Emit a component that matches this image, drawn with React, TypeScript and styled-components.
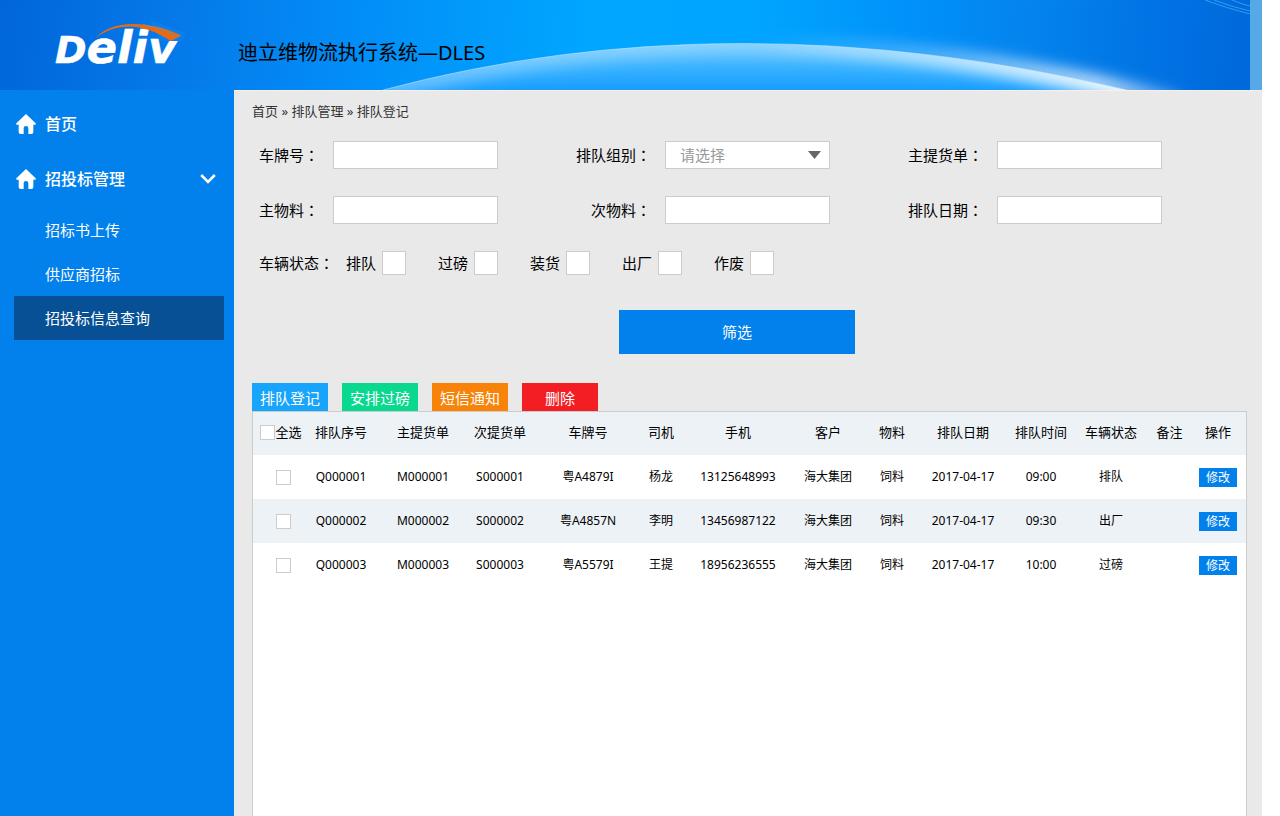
import React from "react";
import styled, { createGlobalStyle } from "styled-components";

const GlobalStyle = createGlobalStyle`
  *, *::before, *::after { box-sizing: border-box; }
  body {
    margin: 0;
    background: #fff;
    color: #000;
    font-family: "Noto Sans", "Noto Sans CJK SC", sans-serif;
    font-size: 15px;
    line-height: 20px;
  }
  button, input, select { font: inherit; margin: 0; }
`;

const Page = styled.div`
  min-height: 100vh;
  display: flex;
  flex-direction: column;
  margin-right: 18px;
`;

/* ---------- header ---------- */

const Header = styled.header`
  position: relative;
  display: flex;
  align-items: center;
  height: 90px;
  padding-left: 52px;
  border-right: 12px solid #55a9e6;
  background: linear-gradient(
    96deg,
    #0166da 0%,
    #0579e9 14%,
    #0290f8 30%,
    #00a6ff 47%,
    #00a5ff 60%,
    #0092fa 72%,
    #0483ee 82%,
    #0070e2 94%,
    #0068da 100%
  );
`;

const Backdrop = styled.svg`
  position: absolute;
  inset: 0;
  width: 100%;
  height: 100%;
`;

const Logo = styled.svg`
  position: relative;
  flex: none;
  width: 140px;
  height: 90px;
  margin-right: 46px;
`;

const SystemName = styled.h1`
  position: relative;
  margin: 16px 0 0;
  font-size: 20px;
  font-weight: 400;
  line-height: 28px;
  white-space: nowrap;
`;

/* ---------- sidebar ---------- */

const Body = styled.div`
  flex: 1;
  display: flex;
`;

const Sidebar = styled.nav`
  flex: none;
  width: 234px;
  padding: 6px 10px 0 14px;
  background: #0280eb;
`;

const NavItem = styled.a`
  display: flex;
  align-items: center;
  height: 55px;
  padding: 0 8px 0 2px;
  gap: 9px;
  color: #fff;
  font-size: 16px;
  font-weight: 500;
  text-decoration: none;
`;

const NavText = styled.span`
  flex: 1;
`;

const SubList = styled.div`
  margin-top: 2px;
`;

const SubItem = styled.a<{ $active?: boolean }>`
  display: flex;
  align-items: center;
  height: 44px;
  padding-left: 31px;
  color: #fff;
  text-decoration: none;
  background: ${(p) => (p.$active ? "#075096" : "transparent")};
`;

/* ---------- main ---------- */

const Main = styled.main`
  flex: 1;
  min-width: 0;
  display: flex;
  flex-direction: column;
  border-top: 1px solid #fbefe8;
  background: #e9e9e9;
`;

const Breadcrumb = styled.div`
  height: 40px;
  padding-left: 18px;
  color: #333;
  font-size: 13px;
  line-height: 40px;
`;

const Crumb = styled.a`
  color: inherit;
  text-decoration: none;
`;

const FilterForm = styled.form`
  display: grid;
  grid-template-columns: repeat(3, 1fr);
  row-gap: 27px;
  margin: 10px 25px 0 7px;
`;

const Field = styled.div`
  position: relative;
  display: flex;
  align-items: center;
  gap: 14px;
`;

const FieldLabel = styled.label`
  width: 78px;
  text-align: right;
  white-space: nowrap;
`;

/* Centred full-width colon */
const Colon = styled.span`
  font-family: "Noto Sans CJK TC", sans-serif;
`;

const TextBox = styled.input`
  width: 165px;
  height: 28px;
  padding: 0 8px;
  border: 1px solid #ccc;
  background: #fff;
`;

const SelectWrap = styled.div`
  position: relative;
  width: 165px;
`;

const SelectBox = styled.select`
  display: block;
  width: 100%;
  height: 28px;
  padding: 0 24px 0 14px;
  border: 1px solid #ccc;
  border-radius: 0;
  appearance: none;
  background: #fff;
  color: #999;
`;

const Arrow = styled.svg`
  position: absolute;
  right: 9px;
  top: 10px;
  width: 13px;
  height: 8px;
  pointer-events: none;
`;

const StatusRow = styled.div`
  grid-column: 1 / -1;
  display: flex;
  align-items: center;
  padding-left: 18px;
`;

const StatusTitle = styled.span`
  width: 87px;
`;

const StatusOption = styled.label`
  display: flex;
  align-items: center;
  gap: 6px;
  margin-right: 32px;
  white-space: nowrap;
`;

const Check = styled.input<{ $size: number }>`
  appearance: none;
  flex: none;
  width: ${(p) => p.$size}px;
  height: ${(p) => p.$size}px;
  border: 1px solid #ccc;
  background: #fff;
  vertical-align: middle;
  &:checked { background: #0280eb; }
`;

const SubmitRow = styled.div`
  grid-column: 1 / -1;
  display: flex;
  justify-content: center;
  padding: 8px 4px 29px 0;
`;

const SubmitButton = styled.button`
  width: 236px;
  height: 44px;
  border: 0;
  background: #0280eb;
  color: #fff;
`;

const Tabs = styled.div`
  display: flex;
  gap: 14px;
  padding-left: 18px;
`;

const TabButton = styled.button<{ $color: string }>`
  width: 76px;
  height: 28px;
  padding: 2px 0 0;
  border: 0;
  background: ${(p) => p.$color};
  color: #fff;
`;

const Panel = styled.section`
  flex: 1;
  margin: 0 15px 0 18px;
  border: 1px solid #ccc;
  border-bottom: 0;
  background: #fff;
`;

const Table = styled.table`
  width: 100%;
  border-collapse: collapse;
  table-layout: fixed;
  font-size: 12px;
`;

const Row = styled.tr<{ $shaded?: boolean }>`
  height: 44px;
  background: ${(p) => (p.$shaded ? "#edf2f6" : "#fff")};
`;

const HeadRow = styled(Row)`
  height: 43px;
  font-size: 13px;
`;

const HeadCell = styled.th`
  padding: 0 0 3px;
  font-weight: 400;
  text-align: center;
  white-space: nowrap;
  &:first-child { padding-left: 5px; }
  &:last-child { padding-right: 9px; }
`;

const Cell = styled.td`
  padding: 0;
  text-align: center;
  white-space: nowrap;
  &:first-child { padding-left: 10px; }
  &:last-child { padding-right: 9px; }
`;

const SelectAll = styled.label`
  display: flex;
  align-items: center;
  justify-content: center;
`;

const EditButton = styled.button`
  display: block;
  width: 38px;
  height: 19px;
  padding: 0;
  border: 0;
  background: #0280eb;
  color: #fff;
  font-size: 12px;
  line-height: 19px;
`;

/* ---------- drawings ---------- */

const HomeIcon = () => (
  <svg width="20" height="20" viewBox="0 0 60 60" fill="#fff" aria-hidden="true">
    <path d="M30 0L59 28Q61 32 57 32H52V54Q52 60 46 60H37V42Q37 36 30 36Q23 36 23 42V60H14Q8 60 8 54V32H3Q-1 32 1 28Z" />
  </svg>
);

const ChevronIcon = () => (
  <svg width="16" height="12" viewBox="0 0 16 12" fill="none" stroke="#fff" strokeWidth="2.6" aria-hidden="true">
    <path d="M1.2 2L8 8.8L14.8 2" />
  </svg>
);

const HeaderBackdrop = () => (
  <Backdrop viewBox="0 0 1250 90" preserveAspectRatio="none" aria-hidden="true">
    <defs>
      <linearGradient id="planet" x1="0" y1="44" x2="0" y2="90" gradientUnits="userSpaceOnUse">
        <stop offset="0" stopColor="#62c4ff" />
        <stop offset="0.5" stopColor="#38b2ff" />
        <stop offset="1" stopColor="#189eff" />
      </linearGradient>
      <linearGradient id="rimInner" x1="383" y1="0" x2="1127" y2="0" gradientUnits="userSpaceOnUse">
        <stop offset="0" stopColor="#fff" stopOpacity="0.3" />
        <stop offset="0.5" stopColor="#fff" stopOpacity="0.25" />
        <stop offset="0.75" stopColor="#fff" stopOpacity="0.6" />
        <stop offset="1" stopColor="#fff" stopOpacity="0.95" />
      </linearGradient>
      <linearGradient id="rimOuter" x1="760" y1="0" x2="1180" y2="0" gradientUnits="userSpaceOnUse">
        <stop offset="0" stopColor="#fff" stopOpacity="0" />
        <stop offset="0.4" stopColor="#fff" stopOpacity="0.3" />
        <stop offset="0.8" stopColor="#fff" stopOpacity="0.75" />
        <stop offset="1" stopColor="#fff" stopOpacity="0.3" />
      </linearGradient>
      <clipPath id="planetClip">
        <path d="M383 90Q730 -3 1127 90Z" />
      </clipPath>
      <clipPath id="skyClip">
        <path d="M0 0H1250V90H1127Q730 -3 383 90H0Z" />
      </clipPath>
      <filter id="soft" x="-10%" y="-60%" width="120%" height="220%">
        <feGaussianBlur stdDeviation="7" />
      </filter>
    </defs>
    <path d="M383 90Q730 -3 1127 90Z" fill="url(#planet)" />
    <g clipPath="url(#planetClip)">
      <path d="M383 90Q730 -3 1127 90L1180 103" fill="none" stroke="url(#rimInner)" strokeWidth="24" filter="url(#soft)" />
    </g>
    <g clipPath="url(#skyClip)">
      <path d="M383 90Q730 -3 1127 90L1180 103" fill="none" stroke="url(#rimOuter)" strokeWidth="17" filter="url(#soft)" />
    </g>
    <path d="M383 90Q730 -3 1127 90" fill="none" stroke="#cfeaff" strokeOpacity="0.5" />
    <g fill="none" stroke="#2f9cf2" strokeWidth="1">
      <path d="M1205 0Q1226 8 1250 14" />
      <path d="M1214 0Q1232 7 1250 11" />
      <path d="M1232 0Q1241 4 1250 6" />
    </g>
  </Backdrop>
);

const DelivLogo = () => (
  <Logo viewBox="52 0 140 90" role="img" aria-label="Deliv">
    <text
      x="55"
      y="63"
      fill="#fff"
      stroke="#fff"
      strokeWidth="0.5"
      fontFamily='"DejaVu Sans", sans-serif'
      fontSize="45"
      fontStyle="italic"
      fontWeight="700"
    >
      <tspan fontSize="38">D</tspan>eliv
    </text>
    <path d="M150 20L186 33L182 41H160Z" fill="#0a80ee" />
    <path
      d="M95 38.500C103 29 117 24 133 24C152 24 168 29 181.500 35.500L171 41C160 34 147 27.500 131 26.500C116 26.500 104 31 95 38.500Z"
      fill="#ea6a12"
    />
    <path d="M143 24.500C158 27.500 168 31.500 178 37.500" fill="none" stroke="#5a94cc" strokeWidth="0.8" />
  </Logo>
);

/* ---------- data ---------- */

const columns = [
  { title: "排队序号", width: 74 },
  { title: "主提货单", width: 90 },
  { title: "次提货单", width: 64 },
  { title: "车牌号", width: 112 },
  { title: "司机", width: 34 },
  { title: "手机", width: 120 },
  { title: "客户", width: 60 },
  { title: "物料", width: 68 },
  { title: "排队日期", width: 74 },
  { title: "排队时间", width: 82 },
  { title: "车辆状态", width: 58 },
  { title: "备注", width: 59 },
  { title: "操作", width: 47 },
];

const rows = [
  ["Q000001", "M000001", "S000001", "粤A4879I", "杨龙", "13125648993", "海大集团", "饲料", "2017-04-17", "09:00", "排队", ""],
  ["Q000002", "M000002", "S000002", "粤A4857N", "李明", "13456987122", "海大集团", "饲料", "2017-04-17", "09:30", "出厂", ""],
  ["Q000003", "M000003", "S000003", "粤A5579I", "王提", "18956236555", "海大集团", "饲料", "2017-04-17", "10:00", "过磅", ""],
];

const statuses = ["排队", "过磅", "装货", "出厂", "作废"];

const tabs = [
  { text: "排队登记", color: "#17a5fb" },
  { text: "安排过磅", color: "#08d98f" },
  { text: "短信通知", color: "#f78408" },
  { text: "删除", color: "#f31e24" },
];

const TextField = ({ id, label }: { id: string; label: string }) => (
  <Field>
    <FieldLabel htmlFor={id}>
      {label}
      <Colon>：</Colon>
    </FieldLabel>
    <TextBox id={id} type="text" />
  </Field>
);

export default function App() {
  return (
    <>
      <GlobalStyle />
      <Page>
        <Header>
          <HeaderBackdrop />
          <DelivLogo />
          <SystemName>迪立维物流执行系统—DLES</SystemName>
        </Header>
        <Body>
          <Sidebar>
            <NavItem href="#home">
              <HomeIcon />
              <NavText>首页</NavText>
            </NavItem>
            <NavItem href="#bidding">
              <HomeIcon />
              <NavText>招投标管理</NavText>
              <ChevronIcon />
            </NavItem>
            <SubList>
              <SubItem href="#upload">招标书上传</SubItem>
              <SubItem href="#supplier">供应商招标</SubItem>
              <SubItem href="#query" $active>
                招投标信息查询
              </SubItem>
            </SubList>
          </Sidebar>
          <Main>
            <Breadcrumb>
              <Crumb href="#home">首页</Crumb> » <Crumb href="#queue">排队管理</Crumb> » <Crumb href="#register">排队登记</Crumb>
            </Breadcrumb>
            <FilterForm onSubmit={(e) => e.preventDefault()}>
              <TextField id="plate" label="车牌号" />
              <Field>
                <FieldLabel htmlFor="group">
                  排队组别<Colon>：</Colon>
                </FieldLabel>
                <SelectWrap>
                  <SelectBox id="group">
                    <option>请选择</option>
                  </SelectBox>
                  <Arrow viewBox="0 0 13 8" aria-hidden="true">
                    <path d="M0 0H13L6.500 8Z" fill="#666" />
                  </Arrow>
                </SelectWrap>
              </Field>
              <TextField id="mainOrder" label="主提货单" />
              <TextField id="mainMaterial" label="主物料" />
              <TextField id="subMaterial" label="次物料" />
              <TextField id="queueDate" label="排队日期" />
              <StatusRow role="group" aria-label="车辆状态">
                <StatusTitle>
                  车辆状态<Colon>：</Colon>
                </StatusTitle>
                {statuses.map((s) => (
                  <StatusOption key={s}>
                    {s}
                    <Check type="checkbox" $size={24} />
                  </StatusOption>
                ))}
              </StatusRow>
              <SubmitRow>
                <SubmitButton type="submit">筛选</SubmitButton>
              </SubmitRow>
            </FilterForm>
            <Tabs>
              {tabs.map((t) => (
                <TabButton key={t.text} type="button" $color={t.color}>
                  {t.text}
                </TabButton>
              ))}
            </Tabs>
            <Panel>
              <Table>
                <colgroup>
                  <col width={51} />
                  {columns.map((c) => (
                    <col key={c.title} width={c.width} />
                  ))}
                </colgroup>
                <thead>
                  <HeadRow $shaded>
                    <HeadCell>
                      <SelectAll>
                        <Check type="checkbox" $size={15} />
                        全选
                      </SelectAll>
                    </HeadCell>
                    {columns.map((c) => (
                      <HeadCell key={c.title}>{c.title}</HeadCell>
                    ))}
                  </HeadRow>
                </thead>
                <tbody>
                  {rows.map((r, i) => (
                    <Row key={r[0]} $shaded={i % 2 === 1}>
                      <Cell>
                        <Check type="checkbox" $size={15} aria-label={r[0]} />
                      </Cell>
                      {r.map((v, j) => (
                        <Cell key={j}>{v}</Cell>
                      ))}
                      <Cell>
                        <EditButton type="button">修改</EditButton>
                      </Cell>
                    </Row>
                  ))}
                </tbody>
              </Table>
            </Panel>
          </Main>
        </Body>
      </Page>
    </>
  );
}
